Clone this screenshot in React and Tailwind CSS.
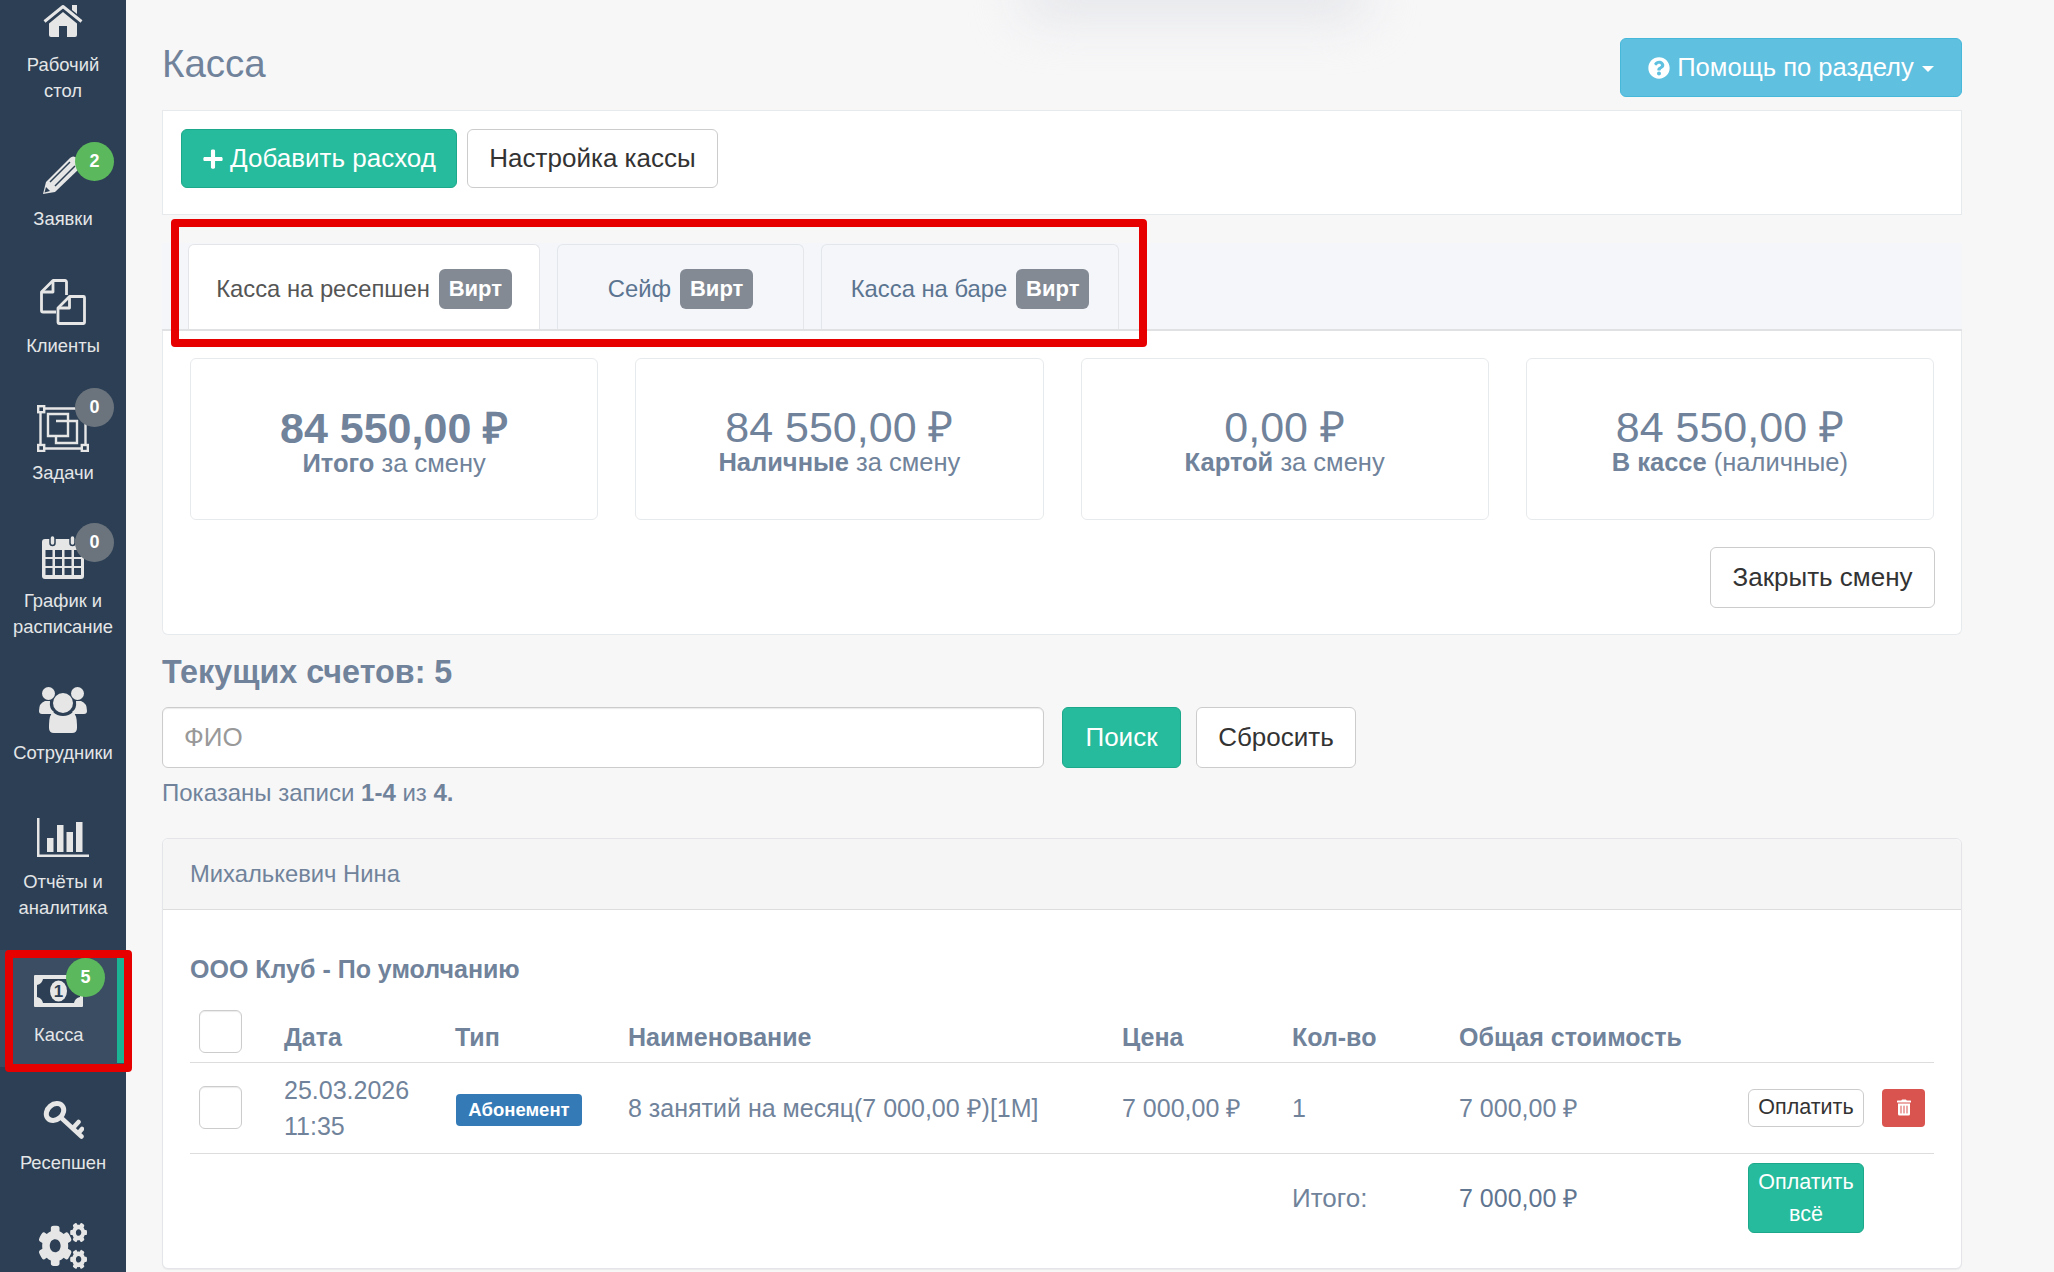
import React from 'react';
import { FaCogs, FaPlus, FaQuestionCircle, FaTrashAlt } from 'react-icons/fa';

const ICON = '#e6e6e6';
const DARK = '#2c3f54';

const HomeIcon = () => (
  <svg viewBox="0 0 40 33" className="w-[40px] h-[33px]">
    <path d="M29 1h5v9l-5-4z" fill={ICON} />
    <path d="M1.500 17.500 20 2.500l18.500 15" fill="none" stroke={ICON} strokeWidth="3" strokeLinejoin="round" />
    <path d="M6 19.500 20 8l14 11.500V31a2 2 0 0 1-2 2h-8V22h-8v11H8a2 2 0 0 1-2-2z" fill={ICON} />
  </svg>
);

const PencilIcon = () => (
  <svg viewBox="0 0 40 39" className="w-[40px] h-[39px]">
    <path d="M0 39 3 27 27 3q3-3 7 0l3 3q3 4 0 7L12 37z" fill={ICON} />
    <path d="M7 27 27 7M12 31 32 11" stroke={DARK} strokeWidth="1.500" fill="none" />
    <path d="M1.500 37.500 3 32l4 4z" fill={DARK} />
  </svg>
);

const FilesIcon = () => (
  <svg viewBox="0 0 46 46" className="w-[46px] h-[46px]" fill="none" stroke={ICON} strokeWidth="2.800" strokeLinejoin="round">
    <path d="M16 33H3a1.500 1.500 0 0 1-1.500-1.500V13L13 1.500h12a1.500 1.500 0 0 1 1.500 1.500v13" />
    <path d="M13 1.500V13H1.500" />
    <path d="M18 29 29.500 17.500h14a1 1 0 0 1 1 1V43.500a1 1 0 0 1-1 1H19a1 1 0 0 1-1-1z" />
    <path d="M29.500 17.500V29H18" />
  </svg>
);

const TasksIcon = () => (
  <svg viewBox="0 0 52 47" className="w-[52px] h-[47px]" fill="none" stroke={ICON} strokeWidth="2.400">
    <path d="M7 3.500h38M3.500 7v33M48.500 7v33M7 43.500h38" />
    <rect x="1.200" y="1.200" width="6" height="6" />
    <rect x="44.800" y="1.200" width="6" height="6" />
    <rect x="1.200" y="40" width="6" height="6" />
    <rect x="44.800" y="40" width="6" height="6" />
    <path d="M11 9h20v7h9v22H19v-7h-8zM19 16h12v15H19" />
  </svg>
);

const CalendarIcon = () => (
  <svg viewBox="0 0 42 44" className="w-[42px] h-[44px]">
    <rect x="0" y="4" width="42" height="40" rx="3" fill={ICON} />
    {[3.500, 13, 22.500, 32].map((x) =>
      [15, 24, 33].map((y) => <rect key={`${x}-${y}`} x={x} y={y} width="7" height="7" fill={DARK} />)
    )}
    <rect x="8" y="0.500" width="5" height="10" rx="2.500" fill={ICON} stroke={DARK} strokeWidth="1.500" />
    <rect x="28" y="0.500" width="5" height="10" rx="2.500" fill={ICON} stroke={DARK} strokeWidth="1.500" />
  </svg>
);

const UsersIcon = () => (
  <svg viewBox="0 0 48 46" className="w-[48px] h-[46px]" fill={ICON}>
    <circle cx="9.500" cy="6.500" r="6.500" />
    <circle cx="38.500" cy="6.500" r="6.500" />
    <path d="M6 14h5q-1 8 4 11-1 .5-2 2H3q-3 0-3-3 0-8 6-10zM42 14h-5q1 8-4 11 1 .5 2 2h10q3 0 3-3 0-8-6-10z" />
    <circle cx="24" cy="16" r="10" />
    <path d="M14 25q4 4 10 4t10-4q4 3 4 13v3q0 5-5 5H15q-5 0-5-5v-3q0-10 4-13z" />
  </svg>
);

const ChartIcon = () => (
  <svg viewBox="0 0 52 39" className="w-[52px] h-[39px]" fill={ICON}>
    <path d="M0 0h2.500v36.500H52V39H0z" />
    <rect x="10" y="20" width="6.500" height="14" />
    <rect x="20" y="7" width="6.500" height="27" />
    <rect x="29.500" y="14" width="6.500" height="20" />
    <rect x="39" y="4" width="6.500" height="30" />
  </svg>
);

const MoneyIcon = () => (
  <svg viewBox="0 0 49 32" className="w-[49px] h-[32px]">
    <rect width="49" height="32" rx="1" fill={ICON} />
    <path d="M9 4h31q1 5 6 6v12q-5 1-6 6H9q-1-5-6-6V10q5-1 6-6z" fill={DARK} />
    <ellipse cx="24.500" cy="16" rx="8.500" ry="10.500" fill={ICON} />
    <text x="24.500" y="22" textAnchor="middle" fontFamily="'Liberation Sans', sans-serif" fontWeight="700" fontSize="17" fill={DARK}>1</text>
  </svg>
);

const KeyIcon = () => (
  <svg viewBox="0 0 41 39" className="w-[41px] h-[39px]" fill="none" stroke={ICON} strokeLinecap="round">
    <ellipse cx="12" cy="12" rx="9.500" ry="7.500" strokeWidth="5" transform="rotate(-40 12 12)" />
    <path d="M19.500 19 38.500 36.500M30 28l5.500-6M35.500 33l3.500-4" strokeWidth="4.500" />
  </svg>
);

const navItems = [
  { icon: <HomeIcon />, lines: ['Рабочий', 'стол'], top: 'pt-[4px]', gap: 'mt-[15px]' },
  { icon: <PencilIcon />, lines: ['Заявки'], top: 'pt-[51px]', gap: 'mt-[12px]', badge: '2', badgeClass: 'bg-[#5cb85c] top-[38px]' },
  { icon: <FilesIcon />, lines: ['Клиенты'], top: 'pt-[47px]', gap: 'mt-[8px]' },
  { icon: <TasksIcon />, lines: ['Задачи'], top: 'pt-[46px]', gap: 'mt-[8px]', badge: '0', badgeClass: 'bg-[#6b747d] top-[29px]' },
  { icon: <CalendarIcon />, lines: ['График и', 'расписание'], top: 'pt-[49px]', gap: 'mt-[9px]', badge: '0', badgeClass: 'bg-[#6b747d] top-[37px]' },
  { icon: <UsersIcon />, lines: ['Сотрудники'], top: 'pt-[47px]', gap: 'mt-[7px]' },
  { icon: <ChartIcon />, lines: ['Отчёты и', 'аналитика'], top: 'pt-[52px]', gap: 'mt-[12px]' },
];

const NavItem = ({ icon, lines, top, gap, badge, badgeClass }) => (
  <div className={`relative flex flex-col items-center ${top}`}>
    {icon}
    {badge && (
      <span className={`absolute left-[75px] w-[39px] h-[39px] rounded-full flex items-center justify-center text-white font-bold text-[18px] ${badgeClass}`}>
        {badge}
      </span>
    )}
    <div className={`${gap} text-center whitespace-nowrap text-[18.400px] leading-[26px] text-[#e4e6e8]`}>
      {lines.map((line) => (
        <div key={line}>{line}</div>
      ))}
    </div>
  </div>
);

const Sidebar = () => (
  <aside className="w-[126px] shrink-0 h-[1272px] overflow-hidden bg-[#2c3f54]">
    {navItems.map((item) => (
      <NavItem key={item.lines[0]} {...item} />
    ))}

    {/* Касса - активный пункт */}
    <div className="relative mt-[29px] h-[117px] bg-[#3a4d62] pt-[25px] pl-[34px]">
      <MoneyIcon />
      <span className="absolute left-[66px] top-[8px] w-[39px] h-[39px] rounded-full bg-[#5cb85c] flex items-center justify-center text-white font-bold text-[18px]">
        5
      </span>
      <div className="mt-[15px] w-[49px] text-center text-[18.400px] leading-[26px] text-[#e4e6e8]">Касса</div>
      <span className="absolute left-[117px] top-[8px] w-[7px] h-[105px] bg-[#1ab394]" />
    </div>

    <NavItem icon={<KeyIcon />} lines={['Ресепшен']} top="pt-[33px]" gap="mt-[11px]" />
    <div className="flex justify-center pt-[47px]">
      <FaCogs preserveAspectRatio="none" className="w-[48px] h-[46px] text-[#e6e6e6]" />
    </div>
  </aside>
);

const Tab = ({ title, active, width }) => (
  <div
    className={`${width} h-[85px] pt-[3px] flex items-center justify-center gap-[9px] rounded-t-md border border-b-0 text-[23.800px] ${
      active ? 'bg-white border-[#e3e5e8] text-[#555555]' : 'bg-[#f4f6fa] border-[#e3e6ea] text-[#5b7490]'
    }`}
  >
    {title}
    <span className="w-[73px] h-[40px] rounded-md bg-[#838a94] text-white font-bold text-[22px] flex items-center justify-center">Вирт</span>
  </div>
);

const StatCard = ({ value, label, rest, bold }) => (
  <div className={`h-[162px] rounded-md border border-[#e7eaec] text-center text-[#70839b] ${bold ? 'pt-[51px]' : 'pt-[50px]'}`}>
    <div className={`text-[43px] leading-[36px] ${bold ? 'font-bold' : ''}`}>{value}</div>
    <div className="text-[25.500px] leading-[34px]">
      <b>{label}</b> {rest}
    </div>
  </div>
);

const columns = [
  { title: 'Дата', width: 'w-[171px]' },
  { title: 'Тип', width: 'w-[173px]' },
  { title: 'Наименование', width: 'w-[494px]' },
  { title: 'Цена', width: 'w-[170px]' },
  { title: 'Кол-во', width: 'w-[167px]' },
  { title: 'Общая стоимость', width: 'w-[289px]' },
];

const Checkbox = () => <span className="block w-[43px] h-[43px] rounded-md border border-[#cccccc] bg-white shadow-[inset_0_1px_1px_rgba(0,0,0,0.08)]" />;

const BillTable = () => (
  <table className="w-[1744px] table-fixed border-collapse text-[25px] text-[#70839b]">
    <thead>
      <tr className="h-[57px] border-b border-[#dddddd]">
        <th className="w-[80px] pl-[9px] align-bottom pb-[9px]">
          <Checkbox />
        </th>
        {columns.map((col) => (
          <th key={col.title} className={`${col.width} pl-[14px] text-left font-bold align-bottom pb-[5px]`}>
            {col.title}
          </th>
        ))}
        <th className="w-[200px]" />
      </tr>
    </thead>
    <tbody>
      <tr className="h-[91px] border-b border-[#dddddd]">
        <td className="pl-[9px]">
          <Checkbox />
        </td>
        <td className="pl-[14px] leading-[36px]">
          25.03.2026
          <br />
          11:35
        </td>
        <td className="pl-[15px]">
          <span className="inline-flex w-[126px] h-[32px] mt-[2px] items-center justify-center rounded bg-[#337ab7] text-white font-bold text-[18.500px] align-middle">Абонемент</span>
        </td>
        <td className="pl-[14px] pt-[2px]">8 занятий на месяц(7 000,00 ₽)[1M]</td>
        <td className="pl-[14px] pt-[2px]">7 000,00 ₽</td>
        <td className="pl-[14px] pt-[2px]">1</td>
        <td className="pl-[14px] pt-[2px]">7 000,00 ₽</td>
        <td className="pl-[14px]">
          <div className="flex items-center gap-[18px]">
            <button className="w-[116px] h-[38px] rounded-md border border-[#cccccc] bg-white text-[#333333] text-[21.500px]">Оплатить</button>
            <button className="w-[43px] h-[38px] rounded bg-[#d9534f] flex items-center justify-center text-white">
              <FaTrashAlt className="w-[14px] h-[17px]" />
            </button>
          </div>
        </td>
      </tr>
      <tr className="h-[91px]">
        <td colSpan={5} />
        <td className="pl-[14px] text-[26px]">Итого:</td>
        <td className="pl-[14px] text-[#5f7590]">7 000,00 ₽</td>
        <td className="pl-[14px]">
          <button className="block w-[116px] h-[70px] -mt-[2px] rounded-md border border-[#1ca88a] bg-[#26bb9c] text-white text-[21.500px] leading-[32px]">Оплатить всё</button>
        </td>
      </tr>
    </tbody>
  </table>
);

const App = () => {
  return (
    <div className="relative flex w-[2054px] h-[1272px] overflow-hidden bg-[#f7f7f8] font-['Liberation_Sans',sans-serif]">
      <Sidebar />

      <main className="w-[1836px] pl-[36px] pt-[38px]">
        {/* Заголовок */}
        <div className="flex items-start justify-between h-[59px]">
          <h1 className="text-[38.500px] leading-[52px] text-[#70839b]">Касса</h1>
          <button className="w-[342px] h-[59px] flex items-center justify-center gap-[7px] rounded-md border border-[#46b8da] bg-[#5fc0e0] text-white text-[25.600px]">
            <FaQuestionCircle className="w-[22px] h-[22px]" />
            Помощь по разделу
            <span className="ml-[1px] mt-[3px] w-0 h-0 border-x-[6px] border-x-transparent border-t-[6px] border-t-white" />
          </button>
        </div>

        {/* Кнопки */}
        <div className="mt-[13px] h-[105px] flex items-start gap-[10px] pt-[18px] pl-[18px] bg-white border border-[#e7eaec]">
          <button className="w-[276px] h-[59px] flex items-center justify-center gap-[6px] rounded-md border border-[#1ca88a] bg-[#26bb9c] text-white text-[26px]">
            <FaPlus className="w-[22px] h-[22px]" />
            Добавить расход
          </button>
          <button className="w-[251px] h-[59px] rounded-md border border-[#cccccc] bg-white text-[#333333] text-[26px]">Настройка кассы</button>
        </div>

        {/* Вкладки */}
        <div className="mt-[28px] h-[88px] flex items-end gap-[17px] pl-[26px] bg-[#f4f6fa] border-b-2 border-[#dfe1e3]">
          <Tab title="Касса на ресепшен" width="w-[352px]" active />
          <Tab title="Сейф" width="w-[247px]" />
          <Tab title="Касса на баре" width="w-[298px]" />
        </div>

        {/* Итоги смены */}
        <section className="relative pt-[27px] pb-[26px] pl-[27px] pr-[26px] bg-white border border-t-0 border-[#e7eaec] rounded-b-md">
          <div className="grid grid-cols-4 gap-x-[37px] mr-[1px]">
            <StatCard value="84 550,00 ₽" label="Итого" rest="за смену" bold />
            <StatCard value="84 550,00 ₽" label="Наличные" rest="за смену" />
            <StatCard value="0,00 ₽" label="Картой" rest="за смену" />
            <StatCard value="84 550,00 ₽" label="В кассе" rest="(наличные)" />
          </div>
          <div className="mt-[27px] flex justify-end">
            <button className="w-[225px] h-[61px] rounded-md border border-[#cccccc] bg-white text-[#333333] text-[26px]">Закрыть смену</button>
          </div>
        </section>

        {/* Поиск */}
        <h2 className="mt-[15px] text-[32.300px] leading-[44px] font-bold text-[#70839b]">Текущих счетов: 5</h2>
        <div className="mt-[13px] flex items-center">
          <input
            placeholder="ФИО"
            className="w-[882px] h-[61px] px-[21px] rounded-md border border-[#cccccc] bg-white text-[26px] placeholder:text-[#999999] shadow-[inset_0_1px_1px_rgba(0,0,0,0.08)]"
          />
          <button className="ml-[18px] w-[119px] h-[61px] rounded-md border border-[#1ca88a] bg-[#26bb9c] text-white text-[26px]">Поиск</button>
          <button className="ml-[15px] w-[160px] h-[61px] rounded-md border border-[#cccccc] bg-white text-[#333333] text-[26px]">Сбросить</button>
        </div>
        <p className="mt-[8px] text-[24px] leading-[34px] text-[#70839b]">
          Показаны записи <b>1-4</b> из <b>4.</b>
        </p>

        {/* Счёт клиента */}
        <section className="mt-[28px] h-[431px] bg-white border border-[#e3e5e8] rounded-md shadow-[0_1px_1px_rgba(0,0,0,0.05)]">
          <div className="h-[71px] flex items-center pl-[27px] bg-[#f5f5f5] border-b border-[#dddddd] rounded-t-md text-[23.800px] text-[#70839b]">
            Михалькевич Нина
          </div>
          <div className="pl-[27px]">
            <h3 className="mt-[42px] text-[25px] leading-[34px] font-bold text-[#70839b]">ООО Клуб - По умолчанию</h3>
            <div className="mt-[19px]">
              <BillTable />
            </div>
          </div>
        </section>
      </main>

      {/* Тень сверху */}
      <div className="absolute left-[1020px] -top-[26px] w-[350px] h-[44px] rounded-full bg-[#e4e5e9] blur-xl" />

      {/* Красные рамки */}
      <div className="absolute left-[171px] top-[219px] w-[976px] h-[128px] border-[8px] border-[#e60000] rounded-sm" />
      <div className="absolute left-[5px] top-[950px] w-[127px] h-[122px] border-[8px] border-[#e60000] rounded-sm" />
    </div>
  );
};

export default App;
